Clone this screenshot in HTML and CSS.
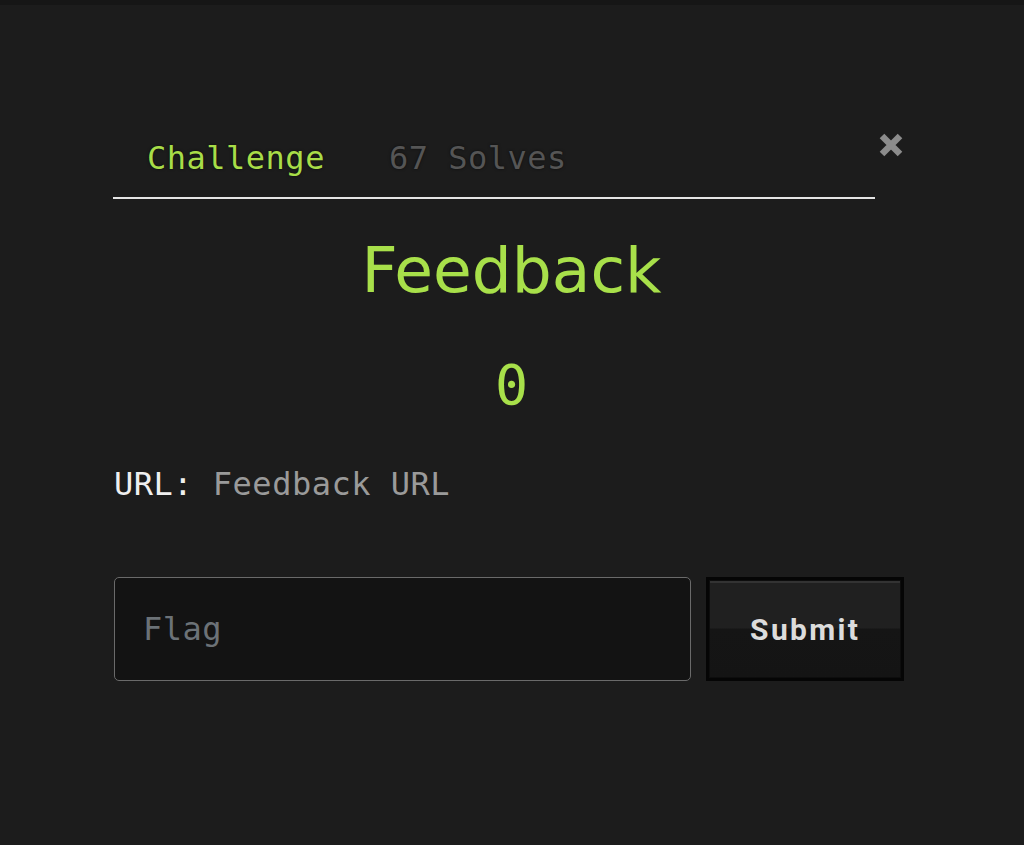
FILE: index.html
```html
<!DOCTYPE html>
<html lang="en">
<head>
<meta charset="utf-8">
<title>Feedback</title>
<link rel="stylesheet" href="styles.css">
</head>
<body>
<div class="topbar"></div>
<div class="modal">
  <div class="modal-header">
    <ul class="tabs">
      <li class="tab active">Challenge</li>
      <li class="tab">67 Solves</li>
    </ul>
    <button class="close" aria-label="Close">
      <svg width="26" height="26" viewBox="0 0 26 26"><path d="M4 4 L22 22 M22 4 L4 22" stroke="#8c8c8c" stroke-width="6.5" fill="none"/></svg>
    </button>
  </div>
  <h1 class="title">Feedback</h1>
  <div class="value">0</div>
  <p class="url"><span class="url-label">URL:</span> <a class="url-link">Feedback URL</a></p>
  <form class="flag-form">
    <input class="flag-input" type="text" placeholder="Flag">
    <button class="submit" type="button">Submit</button>
  </form>
</div>
</body>
</html>
```
FILE: styles.css
```css
html, body {
  margin: 0;
  padding: 0;
  background: #1c1c1c;
  height: 100%;
}
body {
  font-family: "DejaVu Sans Mono", monospace;
  color: #e6e6e6;
}
.topbar {
  height: 5px;
  background: #161616;
}
.modal {
  margin-left: 113px;
  width: 791px;
}
.modal-header {
  display: flex;
  align-items: flex-start;
}
.tabs {
  flex: 1;
  display: flex;
  list-style: none;
  margin: 0 28px 0 0;
  padding: 135px 0 0 2px;
  border-bottom: 2px solid #e4e4e4;
}
.tab {
  font-size: 32px;
  line-height: 37px;
  letter-spacing: 0.5px;
  padding: 0 32px 20px;
  color: #555555;
  text-shadow: 0 0 3px rgba(0,0,0,0.6);
}
.tab.active {
  color: #a8dd48;
}
.close {
  background: none;
  border: 0;
  padding: 0;
  margin: 127px 0 0 -25px;
  width: 26px;
  height: 26px;
  display: block;
}
.close svg { display: block; }
.title {
  font-family: "DejaVu Sans", sans-serif;
  font-weight: normal;
  font-size: 63px;
  line-height: 74px;
  color: #a8e04a;
  text-align: center;
  margin: 35px 0 0 6px;
}
.value {
  font-size: 55px;
  line-height: 64px;
  color: #a8e04a;
  text-align: center;
  margin: 45px 0 0 6px;
}
.url {
  font-size: 32px;
  line-height: 37px;
  letter-spacing: 0.5px;
  margin: 49px 0 0 1px;
}
.url-label { color: #efefef; }
.url-link { color: #9a9a9a; }
.flag-form {
  display: flex;
  gap: 15px;
  margin-top: 74px;
}
.flag-input {
  box-sizing: border-box;
  width: 578px;
  height: 104px;
  margin-left: 1px;
  background: #131313;
  border: 1px solid #6a6a6a;
  border-radius: 5px;
  padding: 0 0 0 28px;
  font-family: "DejaVu Sans Mono", monospace;
  font-size: 32px;
  letter-spacing: 0.5px;
  color: #dddddd;
}
.flag-input::placeholder {
  color: #6c7277;
}
.submit {
  box-sizing: border-box;
  width: 198px;
  height: 104px;
  border: 3px solid #050505;
  box-shadow: inset 0 0 0 1px #0d0d0d, inset 0 2px 0 1px #333333;
  background: linear-gradient(to bottom, #202020 0%, #202020 49%, #151515 50%, #141414 100%);
  font-family: Roboto, sans-serif;
  font-weight: 700;
  font-size: 30px;
  letter-spacing: 2.3px;
  color: #dcdcdc;
  padding: 0;
}
```
